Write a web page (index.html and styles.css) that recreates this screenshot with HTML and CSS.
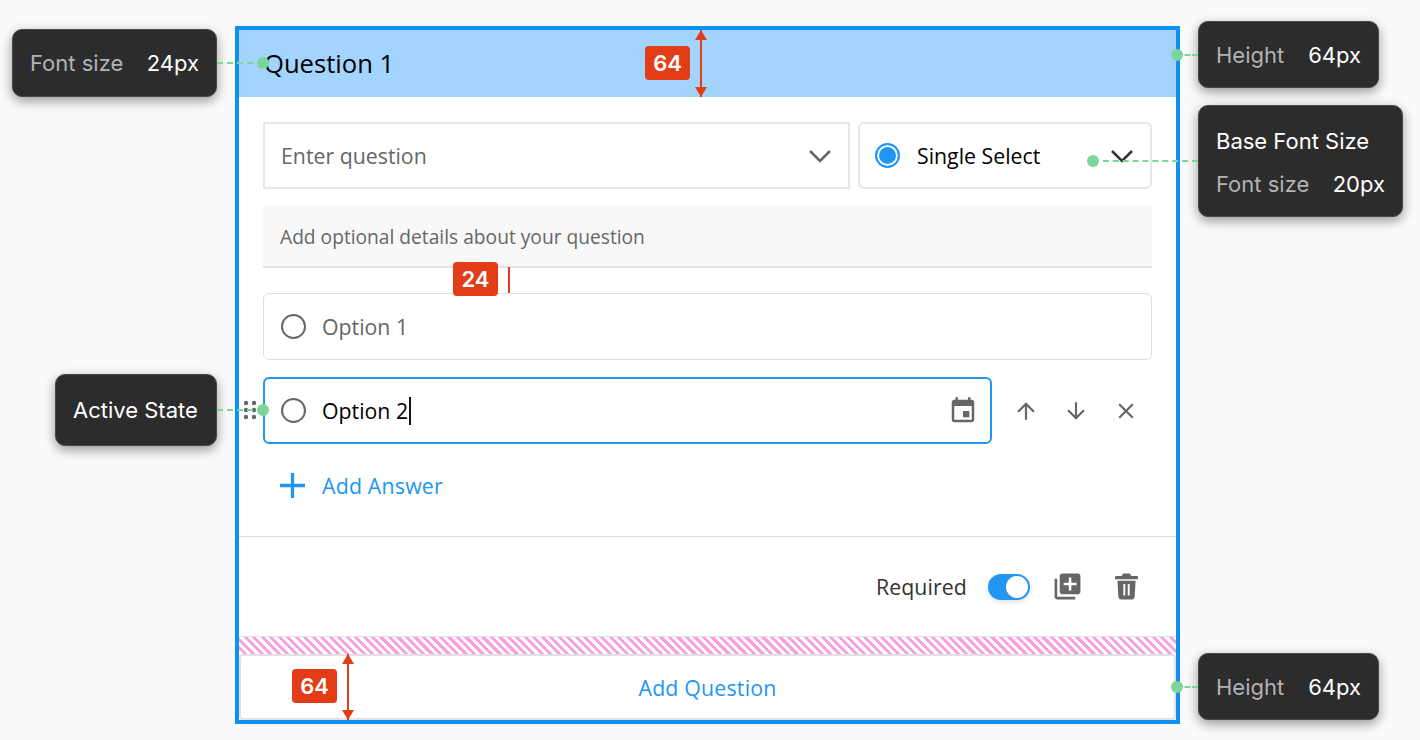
FILE: index.html
```html
<!DOCTYPE html>
<html lang="en">

<head>
  <meta charset="UTF-8">
  <title>Question card spec</title>
  <link rel="stylesheet" href="styles.css">
</head>

<body>

  <div class="card">
    <div class="card-header">Question 1</div>

    <div class="card-body">
      <div class="select-row">
        <div class="field question-select">
          <span class="placeholder">Enter question</span>
          <svg class="chevron" viewBox="0 0 24 14"><path d="M2 2l10 10L22 2" /></svg>
        </div>
        <div class="field type-select">
          <span class="radio radio-on"></span>
          <span class="type-label">Single Select</span>
          <svg class="chevron chevron-dark" viewBox="0 0 24 14"><path d="M2 2l10 10L22 2" /></svg>
        </div>
      </div>

      <div class="details">Add optional details about your question</div>

      <div class="option">
        <span class="radio"></span>
        <span class="placeholder">Option 1</span>
      </div>

      <div class="option-active-row">
        <svg class="drag" viewBox="0 0 14 20">
          <circle cx="3" cy="3" r="2.2" /><circle cx="11" cy="3" r="2.2" />
          <circle cx="3" cy="10" r="2.2" /><circle cx="11" cy="10" r="2.2" />
          <circle cx="3" cy="17" r="2.2" /><circle cx="11" cy="17" r="2.2" />
        </svg>
        <div class="option option-active">
          <span class="radio"></span>
          <span class="typed">Option 2</span>
          <span class="caret"></span>
          <svg class="calendar" viewBox="0 0 24 24"><path d="M17 12h-5v5h5v-5zM16 1v2H8V1H6v2H5c-1.11 0-1.99.9-1.99 2L3 19c0 1.1.89 2 2 2h14c1.1 0 2-.9 2-2V5c0-1.1-.9-2-2-2h-1V1h-2zm3 18H5V8h14v11z" /></svg>
        </div>
        <div class="option-actions">
          <svg class="action" viewBox="0 0 24 24"><path d="M4 12l1.41 1.41L11 7.83V20h2V7.83l5.58 5.59L20 12l-8-8-8 8z" /></svg>
          <svg class="action" viewBox="0 0 24 24"><path d="M20 12l-1.41-1.41L13 16.17V4h-2v12.17l-5.58-5.59L4 12l8 8 8-8z" /></svg>
          <svg class="action" viewBox="0 0 24 24"><path d="M19 6.41L17.59 5 12 10.59 6.41 5 5 6.41 10.59 12 5 17.59 6.41 19 12 13.41 17.59 19 19 17.59 13.41 12z" /></svg>
        </div>
      </div>

      <div class="add-answer">
        <svg class="plus" viewBox="0 0 26 26"><path d="M11.300 0h3.400v11.300H26v3.400H14.700V26h-3.400V14.700H0v-3.400h11.300z" /></svg>
        <span>Add Answer</span>
      </div>
    </div>

    <div class="card-footer">
      <span class="required-label">Required</span>
      <span class="toggle"><span class="knob"></span></span>
      <svg class="copy-icon" viewBox="0 0 24 24"><path d="M4 6H2v14c0 1.1.9 2 2 2h14v-2H4V6zm16-4H8c-1.1 0-2 .9-2 2v12c0 1.1.9 2 2 2h12c1.1 0 2-.9 2-2V4c0-1.1-.9-2-2-2zm-1 9h-4v4h-2v-4H9V9h4V5h2v4h4v2z" /></svg>
      <svg class="trash-icon" viewBox="0 0 24 27"><path fill-rule="evenodd" d="M8.500 0h7l1.500 2.500h6c.6 0 1 .4 1 1V6H0V3.500c0-.6.4-1 1-1h6zM2.500 7.500h19L20.500 24c-.1 1.700-1.300 3-3 3h-11c-1.700 0-2.900-1.300-3-3zM8.700 11v12h2V11zM13.300 11v12h2V11z" /></svg>
    </div>

    <div class="hatch"></div>

    <div class="add-question">Add Question</div>
  </div>

  <!-- spec annotations on top of the card -->
  <div class="tip tip-font">
    <span class="tip-key">Font size</span><span>24px</span>
  </div>
  <div class="tip tip-header">
    <span class="tip-key">Height</span><span>64px</span>
  </div>
  <div class="tip tip-base">
    <div class="tip-title">Base Font Size</div>
    <div class="tip-line"><span class="tip-key">Font size</span><span>20px</span></div>
  </div>
  <div class="tip tip-active">Active State</div>
  <div class="tip tip-footer">
    <span class="tip-key">Height</span><span>64px</span>
  </div>

  <span class="lead lead-font"></span>
  <span class="lead lead-header"></span>
  <span class="lead lead-base"></span>
  <span class="lead lead-active"></span>
  <span class="lead lead-footer"></span>

  <span class="dot dot-font"></span>
  <span class="dot dot-header"></span>
  <span class="dot dot-base"></span>
  <span class="dot dot-active"></span>
  <span class="dot dot-footer"></span>

  <span class="badge badge-header">64</span>
  <span class="badge badge-gap">24</span>
  <span class="badge badge-footer">64</span>

  <span class="arrow arrow-header"></span>
  <span class="gap-line"></span>
  <span class="arrow arrow-footer"></span>

</body>

</html>
```

FILE: styles.css
```css
* {
  box-sizing: border-box;
}

body {
  margin: 0;
  height: 740px;
  overflow: hidden;
  position: relative;
  padding: 26px 0 0 235px;
  background-color: #fafafa;
  font-family: 'Open Sans', sans-serif;
  font-size: 21.3px;
  color: #000;
}

.card {
  width: 945px;
  height: 698px;
  border: 4px solid #0f92ef;
  background: #fff;
  display: flex;
  flex-direction: column;
}

.card-header {
  height: 67px;
  flex: none;
  display: flex;
  align-items: center;
  padding-left: 25px;
  padding-bottom: 1px;
  background-color: #a3d4fd;
  font-size: 25.6px;
}

.card-body {
  height: 439px;
  flex: none;
  padding: 25px 24px 0;
}

.select-row {
  display: flex;
  gap: 8px;
}

.field {
  height: 67px;
  display: flex;
  align-items: center;
  border: 2px solid #e6e6e6;
  background: #fff;
}

.question-select {
  width: 587px;
  padding: 0 16px;
  justify-content: space-between;
}

.type-select {
  width: 294px;
  padding: 0 16px 0 15px;
  border-radius: 6px;
}

.type-label {
  margin-left: 17px;
  margin-right: auto;
}

.placeholder {
  color: #666;
}

.chevron {
  width: 24px;
  height: 14px;
  fill: none;
  stroke: #666;
  stroke-width: 2.6;
}

.chevron-dark {
  stroke: #333;
}

.radio {
  width: 25px;
  height: 25px;
  flex: none;
  border: 2px solid #666;
  border-radius: 50%;
  background: #fff;
}

.radio-on {
  border-color: #2196f3;
  background: #2196f3;
  box-shadow: inset 0 0 0 2px #fff;
}

.details {
  height: 62px;
  margin-top: 17px;
  display: flex;
  align-items: center;
  padding-left: 17px;
  background-color: #f8f8f8;
  border-bottom: 2px solid #e2e2e2;
  font-size: 19.2px;
  color: #666;
}

.option {
  height: 67px;
  margin-top: 25px;
  display: flex;
  align-items: center;
  padding-left: 17px;
  gap: 16px;
  border: 1px solid #dedede;
  border-radius: 6px;
}

.option-active-row {
  position: relative;
  margin-top: 17px;
  display: flex;
  align-items: center;
}

.option-active {
  width: 729px;
  margin-top: 0;
  border: 2px solid #2196f3;
  padding-left: 16px;
  padding-right: 13px;
}

.typed {
  color: #000;
}

.caret {
  width: 2px;
  height: 28px;
  margin-left: -15px;
  background: #111;
}

.calendar {
  width: 30px;
  height: 30px;
  margin-left: auto;
  margin-right: -1px;
  fill: #666;
}

.drag {
  position: absolute;
  left: -20px;
  top: 23px;
  width: 14px;
  height: 20px;
  fill: #666;
}

.option-actions {
  display: flex;
  gap: 24px;
  margin-left: 21px;
}

.action {
  width: 26px;
  height: 26px;
  fill: #666;
}

.add-answer {
  height: 60px;
  margin-top: 11px;
  padding-left: 17px;
  display: flex;
  align-items: center;
  gap: 17px;
  color: #2196f3;
  font-weight: 500;
  letter-spacing: 0.2px;
}

.plus {
  width: 25px;
  height: 25px;
  fill: #2196f3;
}

.card-footer {
  height: 100px;
  flex: none;
  display: flex;
  align-items: center;
  justify-content: flex-end;
  padding: 0 38px 0 0;
  border-top: 1px solid #dedede;
}

.required-label {
  color: #333;
  letter-spacing: 0.1px;
}

.toggle {
  width: 42px;
  height: 26px;
  margin-left: 21px;
  padding: 2px;
  display: flex;
  justify-content: flex-end;
  border-radius: 13px;
  background: #2196f3;
  box-shadow: 0 2px 5px rgba(0, 0, 0, 0.12);
}

.knob {
  width: 22px;
  height: 22px;
  border-radius: 50%;
  background: #fff;
}

.copy-icon {
  width: 31px;
  height: 31px;
  margin-left: 22px;
  fill: #666;
}

.trash-icon {
  width: 23px;
  height: 27px;
  margin-left: 32px;
  fill: #666;
}

.hatch {
  height: 18px;
  flex: none;
  border-top: 1px solid #e2e2e2;
  background: repeating-linear-gradient(45deg, #fff, #fff 3px, #fa9fe0 3px, #fa9fe0 6px);
}

.add-question {
  height: 66px;
  flex: none;
  display: flex;
  align-items: center;
  justify-content: center;
  border: 2px solid #e2e2e2;
  border-radius: 4px;
  color: #2196f3;
  font-weight: 500;
  letter-spacing: 0.2px;
}

/* annotations */

.tip {
  position: absolute;
  display: flex;
  justify-content: space-between;
  align-items: center;
  padding: 0 17px;
  background: #2c2c2c;
  border: 1px solid #484848;
  border-radius: 10px;
  box-shadow: 0 4px 12px rgba(0, 0, 0, 0.4);
  font-family: Inter, sans-serif;
  font-size: 22px;
  color: #fff;
}

.tip-key {
  color: #b3b3b3;
}

.tip-font {
  left: 12px;
  top: 29px;
  width: 205px;
  height: 68px;
}

.tip-header {
  left: 1198px;
  top: 21px;
  width: 181px;
  height: 67px;
}

.tip-base {
  left: 1198px;
  top: 105px;
  width: 205px;
  height: 112px;
  display: block;
  padding-top: 22px;
}

.tip-title {
  margin-bottom: 17px;
}

.tip-line {
  display: flex;
  justify-content: space-between;
}

.tip-active {
  left: 55px;
  top: 374px;
  width: 162px;
  height: 72px;
}

.tip-footer {
  left: 1198px;
  top: 653px;
  width: 181px;
  height: 67px;
}

.lead {
  position: absolute;
  height: 0;
  border-top: 2px dashed #7dd59a;
}

.lead-font { left: 217px; top: 62px; width: 46px; }
.lead-header { left: 1177px; top: 54px; width: 21px; }
.lead-base { left: 1093px; top: 160px; width: 105px; }
.lead-active { left: 217px; top: 409px; width: 46px; }
.lead-footer { left: 1177px; top: 686px; width: 21px; }

.dot {
  position: absolute;
  width: 12px;
  height: 12px;
  border-radius: 50%;
  background: #7dd59a;
}

.dot-font { left: 257px; top: 57px; }
.dot-header { left: 1171px; top: 49px; }
.dot-base { left: 1087px; top: 155px; }
.dot-active { left: 257px; top: 404px; }
.dot-footer { left: 1171px; top: 681px; }

.badge {
  position: absolute;
  width: 45px;
  height: 34px;
  display: flex;
  align-items: center;
  justify-content: center;
  border-radius: 4px;
  background: #e23d16;
  font-family: Inter, sans-serif;
  font-size: 22px;
  font-weight: 600;
  color: #fff;
}

.badge-header { left: 645px; top: 46px; }
.badge-gap { left: 453px; top: 262px; }
.badge-footer { left: 292px; top: 669px; }

.arrow {
  position: absolute;
  width: 2px;
  background: #e23d16;
}

.arrow::before,
.arrow::after {
  content: "";
  position: absolute;
  left: -5px;
  border-left: 6px solid transparent;
  border-right: 6px solid transparent;
}

.arrow::before {
  top: 0;
  border-bottom: 10px solid #e23d16;
}

.arrow::after {
  bottom: 0;
  border-top: 10px solid #e23d16;
}

.arrow-header { left: 700px; top: 30px; height: 67px; }
.arrow-footer { left: 347px; top: 654px; height: 66px; }

.gap-line {
  position: absolute;
  left: 508px;
  top: 267px;
  width: 2px;
  height: 26px;
  background: #e23d16;
}
```
